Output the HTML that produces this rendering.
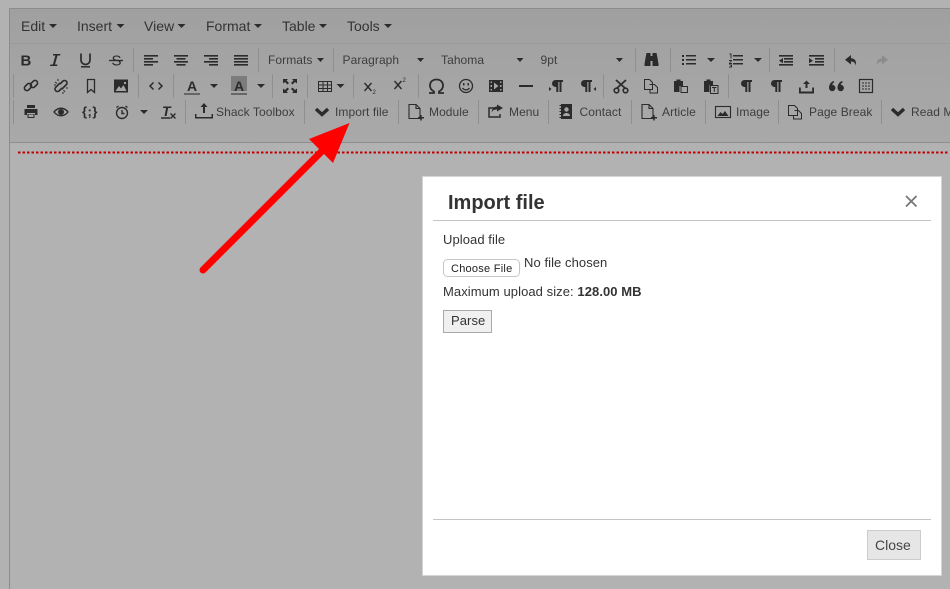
<!DOCTYPE html>
<html><head><meta charset="utf-8"><style>
html,body{margin:0;padding:0;background:#b2b2b2;width:950px;height:589px;overflow:hidden}
svg{display:block;font-family:"Liberation Sans",sans-serif}
.m{font-size:14px;fill:#333}
.t{font-size:12px;fill:#3d3d3d;letter-spacing:.07px}
.s{stroke:#8f8f8f;stroke-width:1}
.i{fill:none;stroke:#2b2b2b}
.f{fill:#2b2b2b}
.d{font-size:13px;fill:#333;letter-spacing:.07px}
</style></head><body>
<svg width="950" height="589" viewBox="0 0 950 589" stroke-width="1.300" xmlns="http://www.w3.org/2000/svg">
<defs><linearGradient id="g" x1="0" y1="0" x2="0" y2="1"><stop offset="0" stop-color="#a0a0a0"/><stop offset="1" stop-color="#a9a9a9"/></linearGradient></defs>
<rect width="950" height="589" fill="#b2b2b2"/>
<rect x="10" y="9" width="940" height="133" fill="url(#g)"/>
<path d="M950 8.500H9.500V589" fill="none" stroke="#8c8c8c" stroke-width="1"/>
<path d="M10 43.500H950" stroke="#9b9b9b" stroke-width="1"/>
<path d="M10 142.500H950" stroke="#8e8e8e" stroke-width="1"/>
<path d="M18 152.500H948" stroke="#c00000" stroke-width="2" stroke-dasharray="2.500 2"/>

<!-- menu -->
<text class="m" x="21" y="31">Edit</text><text class="m" x="77" y="31">Insert</text><text class="m" x="144" y="31">View</text><text class="m" x="206" y="31">Format</text><text class="m" x="282" y="31">Table</text><text class="m" x="347" y="31">Tools</text>
<path class="f" d="M49 24h8l-4 4zM116.500 24h8l-4 4zM177.500 24h8l-4 4zM254 24h8l-4 4zM319 24h8l-4 4zM384 24h8l-4 4z"/>

<!-- separators -->
<path class="s" d="M133.500 48v24M258.500 48v24M333.500 48v24M635.500 48v24M670.500 48v24M769.500 48v24M834.500 48v24M13.500 74v24M138.500 74v24M173.500 74v24M272.500 74v24M307.500 74v24M353.500 74v24M418.500 74v24M603.500 74v24M728.500 74v24M13.500 100v24M185.500 100v24M304.500 100v24M398.500 100v24M478.500 100v24M548.500 100v24M631.500 100v24M705.500 100v24M778.500 100v24M881.500 100v24"/>

<!-- row 1 -->
<text x="20.500" y="65.500" font-size="15" font-weight="bold" fill="#2b2b2b">B</text>
<path class="f" d="M53 54h7.500l-.5 1.500h-2.500L55 64.500h2.500l-.4 1.500H50l.4-1.500h2.500l2.500-9H53z"/>
<path d="M81 53.500v6.500a4.500 4.500 0 0 0 9 0v-6.500" class="i" stroke-width="1.700"/><path d="M81 66.800h9" class="i" stroke-width="1.500"/>
<text x="111.500" y="65.500" font-size="15" fill="#2b2b2b">S</text><path d="M109 60.500h14" class="i"/>
<path class="f" d="M144 55h14v1.600h-14zM144 58h9v1.600h-9zM144 61h14v1.600h-14zM144 64h9v1.600h-9zM174 55h14v1.600h-14zM176.500 58h9v1.600h-9zM174 61h14v1.600h-14zM176.500 64h9v1.600h-9zM204 55h14v1.600h-14zM209 58h9v1.600h-9zM204 61h14v1.600h-14zM209 64h9v1.600h-9zM234 55h14v1.600h-14zM234 58h14v1.600h-14zM234 61h14v1.600h-14zM234 64h14v1.600h-14z"/>
<text class="t" x="268" y="64">Formats</text><text class="t" x="342.500" y="64">Paragraph</text><text class="t" x="441" y="64">Tahoma</text><text class="t" x="540.500" y="64">9pt</text>
<path class="f" d="M317 58h7l-3.500 4zM417 58h7l-3.500 4zM516.500 58h7l-3.500 4zM616 58h7l-3.500 4zM707 58h8l-4 4zM754 58h8l-4 4z"/>
<path class="f" d="M647 53h4v3h2v-3h4l1 5 1 6v2h-6v-5h-2v5h-6v-2l1-6z" transform="translate(-.5 0)"/>
<path class="f" d="M682 55h2v2h-2zM682 59h2v2h-2zM682 63h2v2h-2zM686 55h10v1.500h-10zM686 59h10v1.500h-10zM686 63h10v1.500h-10zM733 55h10v1.500h-10zM733 59h10v1.500h-10zM733 63h10v1.500h-10zM729.500 53.500h2v5h-1v-4h-1zM729 60h3v1l-2 2h2v1h-3v-1l2-2h-2zM729 64.500h3v3h-3v-1h2v-.500h-1v-.500h1v-.500h-2z"/>
<path class="f" d="M779 55h14v1.600h-14zM784 58h9v1.600h-9zM784 61h9v1.600h-9zM779 64h14v1.600h-14zM783 58l-4 2.700 4 2.500zM809 55h15v1.600h-15zM809 64h15v1.600h-15zM815 58h9v1.600h-9zM815 61h9v1.600h-9zM809 58l4 2.700-4 2.500z"/>
<path class="f" d="M851 55v3.200c3.500 0 5.500 2.300 5 7.300-1-3-2.500-4-5-4v3l-6-4.800z"/>
<path fill="#8c8c8c" d="M882 55v3.200c-3.500 0-5.500 2.300-5 7.300 1-3 2.500-4 5-4v3l6-4.800z"/>

<!-- row 2 -->
<g class="i" stroke-width="1.600"><rect x="24" y="84.500" width="8" height="5" rx="2.500" transform="rotate(-45 28 87)"/><rect x="30" y="81.500" width="8" height="5" rx="2.500" transform="rotate(-45 34 84)"/></g>
<g class="i" stroke-width="1.600"><path d="M60 83l-4.500 4.500a2.500 2.500 0 0 0 3.500 3.500l3-3M62 89l4.500-4.500a2.500 2.500 0 0 0-3.500-3.500l-3 3"/><path d="M55 82l2 1.500M58 79v2M54 85h2M65 92l-1.500-2M68 88h-2M63 94v-2" stroke-width="1"/></g>
<path class="i" d="M87.500 79.500h7v13l-3.500-3-3.500 3z"/>
<rect x="114" y="79.500" width="14" height="13" class="f"/><path d="M115.500 91l3.500-5 2 2.500 2.500-3.500 3 6zM124 82h2v2h-2z" fill="#a6a6a6"/>
<path class="i" d="M153.500 82.500l-3.500 3.500 3.500 3.500M158.500 82.500l3.500 3.500-3.500 3.500" stroke-width="1.500"/>
<text x="187" y="91" font-size="14" font-weight="bold" fill="#2b2b2b">A</text><rect x="184" y="93" width="16" height="2" fill="#666"/>
<rect x="231" y="76" width="16" height="15" fill="#7c7c7c"/><text x="234" y="91" font-size="14" font-weight="bold" fill="#2b2b2b">A</text><rect x="231" y="93" width="16" height="2" fill="#666"/>
<path class="f" d="M210 84h8l-4 4zM257 84h8l-4 4zM336.500 84h8l-4 4zM140 110h8l-4 4z"/>
<path class="f" d="M283 79h5l-1.500 1.500 2.500 2.500-1.500 1.500-2.500-2.500-2 1.500zM297 79h-5l1.500 1.500-2.500 2.500 1.500 1.500 2.500-2.500 2 1.500zM283 93h5l-1.500-1.500 2.500-2.500-1.500-1.500-2.500 2.500-2-1.500zM297 93h-5l1.500-1.500-2.500-2.500 1.500-1.500 2.500 2.500 2-1.500z"/>
<path class="i" d="M318.500 81.500h13v10h-13zM318.500 85h13M318.500 88.500h13M323 81.500v10M327.500 81.500v10" stroke-width="1"/>
<path class="i" d="M364.500 83l7 8M371.500 83l-7 8M394.500 81l7 8M401.500 81l-7 8" stroke-width="1.400"/>
<text x="372.500" y="94" font-size="6" fill="#2b2b2b">2</text><text x="402.500" y="82" font-size="6" fill="#2b2b2b">2</text>
<path class="i" stroke-width="1.800" d="M429 93h5v-1.500c-3-1.500-4-3.500-4-6 0-3.500 2.500-6 6.500-6s6.500 2.500 6.500 6c0 2.500-1 4.500-4 6V93h5"/>
<circle cx="466" cy="86" r="6.500" class="i"/><path class="f" d="M463 83h1.500v2.500H463zM467.500 83H469v2.500h-1.500z"/><path class="i" d="M462.500 88c2 2.500 5 2.500 7 0"/>
<rect x="489" y="80" width="14" height="12" class="f"/><path fill="#a6a6a6" d="M490.500 81.500h1.500v1.500h-1.500zM490.500 85h1.500v2h-1.500zM490.500 89h1.500v1.500h-1.500zM500 81.500h1.500v1.500H500zM500 85h1.500v2H500zM500 89h1.500v1.500H500zM494 82.500l4.500 3.500-4.500 3.500z"/>
<rect x="519" y="85" width="14" height="2" class="f"/>
<path class="f" d="M552 83.500a3.500 3.500 0 0 1 3.500-3.500H563v2h-1.500v10h-2v-10h-1.200v10h-2v-5h-1a3.500 3.500 0 0 1-3.300-3.500z"/><path class="f" d="M549 87l2.500 2-2.500 2z"/>
<path class="f" d="M581 83.500a3.500 3.500 0 0 1 3.500-3.500H592v2h-1.500v10h-2v-10h-1.200v10h-2v-5h-1a3.500 3.500 0 0 1-3.300-3.500z"/><path class="f" d="M596 87l-2.500 2 2.500 2z"/>
<path class="i" stroke-width="1.800" d="M616 80l9.500 8.500M626 80l-9.500 8.500"/><circle cx="616.500" cy="90.500" r="2.300" class="i" stroke-width="1.600"/><circle cx="625.500" cy="90.500" r="2.300" class="i" stroke-width="1.600"/>
<path class="i" stroke-width="1" d="M644.500 79.500h5l3 3v7h-8zM649.500 84.500h5l3 3v5.500h-7.500v-3.500"/>
<path class="f" d="M674 81h2.500v-1.500h4V81h2.500v5h-3.500v6H674z"/><path fill="none" stroke="#2b2b2b" stroke-width="1" d="M681 86.500h6.500v6h-6.500z"/>
<path class="f" d="M704 81h2.500v-1.500h4V81h2.500v4h-3.500v7H704z"/><rect x="710.500" y="85.500" width="7.500" height="8" fill="#a6a6a6" stroke="#2b2b2b" stroke-width="1"/><path class="f" d="M712 87h4.500v1h-1.700v4h-1v-4H712z"/>
<path class="f" d="M741 83.500a3.500 3.500 0 0 1 3.500-3.500H752v2h-1.500v10h-2v-10h-1.200v10h-2v-5h-1a3.500 3.500 0 0 1-3.300-3.500z"/>
<path class="f" d="M771 83.500a3.500 3.500 0 0 1 3.500-3.500H782v2h-1.500v10h-2v-10h-1.200v10h-2v-5h-1a3.500 3.500 0 0 1-3.300-3.500z"/>
<path class="f" d="M805.500 88v-4H803l3.500-3.500 3.500 3.500h-2.500v4zM799 87.500h1.800v4h11.400v-4h1.800v6h-15z"/>
<path class="f" d="M829 88a3.200 3.200 0 1 0 3.200-3.200c.2-1 .8-1.800 1.800-2.300V81c-3 .5-5 3.500-5 7zM837.500 88a3.200 3.200 0 1 0 3.200-3.200c.2-1 .8-1.800 1.800-2.300V81c-3 .5-5 3.500-5 7z"/>
<rect x="859.500" y="79.500" width="13" height="13" class="i" stroke-width="1.200"/><path class="i" stroke-width="1" stroke-dasharray="2 1" d="M862 83h8M862 86h8M862 89h8"/>

<!-- row 3 -->
<path class="f" d="M27 105h8v3h-8zM24.500 109h13v6h-2.500v-2h-8v2h-2.500zM27.500 114h7v4h-7z"/><path fill="#a6a6a6" d="M28.500 114.500h5v2.500h-5z"/>
<path class="i" stroke-width="1.400" d="M54 112c4-5 10-5 14 0-4 5-10 5-14 0z"/><circle cx="61" cy="112" r="3" class="f"/>
<text x="82" y="116" font-size="13" font-weight="bold" fill="#2b2b2b" letter-spacing=".5">{;}</text>
<circle cx="122" cy="113" r="5.500" class="i" stroke-width="1.400"/><path class="i" d="M122 110v3.500h2.500M116.500 107.500l2-1.500M127.500 107.500l-2-1.500" stroke-width="1.400"/>
<text x="162" y="116" font-size="14" font-weight="bold" font-style="italic" fill="#2b2b2b">T</text><path class="i" stroke-width="1.400" d="M161 118h9M170.500 113.500l5 5M175.500 113.500l-5 5"/>
<path class="f" d="M203 113v-6h-2.500l3.500-4 3.500 4H205v6zM195 114h1.500v3h15v-3h1.500v4.500h-18z"/>
<text class="t" x="216" y="116">Shack Toolbox</text>
<path class="i" stroke-width="3.400" d="M316 109l6 5.500 6-5.500"/>
<text class="t" x="335" y="116">Import file</text>
<path class="i" stroke-width="1.100" d="M409 104.500h7l4 4v10h-11zM416 104.500v4h4"/><path class="f" d="M418 117h6v1.500h-6zM420.200 115h1.500v5.500h-1.500z"/><text class="t" x="429" y="116">Module</text>
<path class="i" stroke-width="1.500" d="M497 108h-8v9h11v-3"/><path class="f" d="M497 104.500l6 3.500-6 3.500v-2c-3 0-4.500 1-5.500 3 .3-3.500 2.500-6 5.500-6z"/><text class="t" x="509" y="116">Menu</text>
<rect x="561" y="104" width="11" height="15" class="f"/><path fill="#2b2b2b" d="M559.500 105h2v1h-2zM559.500 108h2v1h-2zM559.500 111h2v1h-2zM559.500 114h2v1h-2zM559.500 117h2v1h-2z"/><circle cx="566.500" cy="109.500" r="2.200" fill="#a6a6a6"/><path fill="#a6a6a6" d="M563 116c0-4 7-4 7 0z"/><text class="t" x="579.500" y="116">Contact</text>
<path class="i" stroke-width="1.100" d="M642 104.500h7l4 4v10h-11zM649 104.500v4h4"/><path class="f" d="M651 117h6v1.500h-6zM653.200 115h1.500v5.500h-1.500z"/><text class="t" x="662" y="116">Article</text>
<rect x="715.500" y="106.500" width="15" height="11" class="i" stroke-width="1.100"/><path class="f" d="M717.500 116l3-4 2 2 2.500-3 3.500 5z"/><text class="t" x="736" y="116">Image</text>
<path class="i" stroke-width="1" d="M788.500 105.500h6l3 3v7h-9zM794.500 110.500h4l3 3v5.500h-8v-3.500"/><text class="t" x="809" y="116">Page Break</text>
<path class="i" stroke-width="3.400" d="M892 109l6 5.500 6-5.500"/><text class="t" x="911" y="116">Read M</text>

<!-- arrow -->
<path d="M203 270L327 146" stroke="#f00" stroke-width="7" stroke-linecap="round"/>
<path d="M349.500 123L309 139L333 163z" fill="#f00"/>

<!-- modal -->
<rect x="422.500" y="176.500" width="519" height="399" fill="#fff" stroke="#d4d4d4" stroke-width="1"/>
<path d="M433 220.500h498M433 519.500h498" stroke="#c4c4c4" stroke-width="1"/>
<text x="448" y="209" font-size="20" font-weight="bold" fill="#333">Import file</text>
<path d="M906 196l10.500 10.500M916.500 196L906 206.500" stroke="#777" stroke-width="1.800"/>
<text class="d" x="443" y="244">Upload file</text>
<rect x="443.500" y="259.500" width="76" height="17" rx="4" fill="#fff" stroke="#c6c6c6" stroke-width="1"/>
<text x="451" y="272" font-size="11" fill="#222" letter-spacing=".25">Choose File</text>
<text class="d" x="524" y="267">No file chosen</text>
<text class="d" x="443" y="296">Maximum upload size: <tspan font-weight="bold">128.00 MB</tspan></text>
<rect x="443.500" y="310.500" width="48" height="22" fill="#f0f0f0" stroke="#aaa" stroke-width="1"/>
<text class="d" x="451" y="325">Parse</text>
<rect x="867.500" y="530.500" width="53" height="29" fill="#e6e6e6" stroke="#ccc" stroke-width="1"/>
<text x="875" y="550" font-size="14" fill="#444">Close</text>
</svg>
</body></html>
